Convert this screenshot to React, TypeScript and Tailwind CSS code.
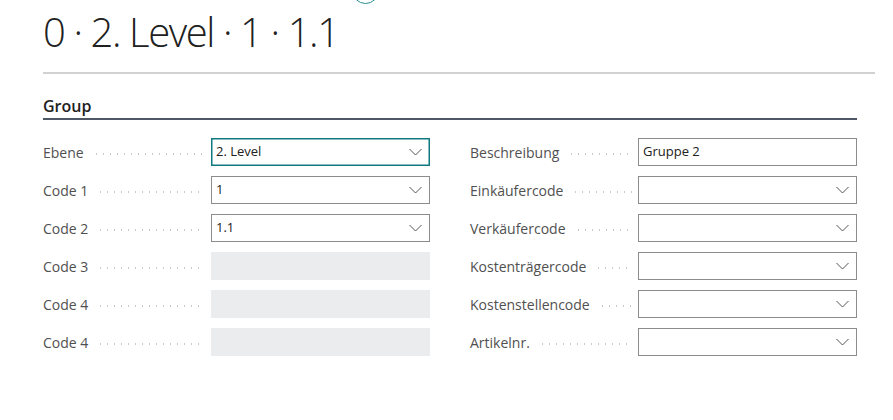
import React from "react";

type Field = {
  label: string;
  value?: string;
  kind: "select" | "text" | "disabled";
  focused?: boolean;
};

const leftFields: Field[] = [
  { label: "Ebene", value: "2. Level", kind: "select", focused: true },
  { label: "Code 1", value: "1", kind: "select" },
  { label: "Code 2", value: "1.1", kind: "select" },
  { label: "Code 3", kind: "disabled" },
  { label: "Code 4", kind: "disabled" },
  { label: "Code 4", kind: "disabled" },
];

const rightFields: Field[] = [
  { label: "Beschreibung", value: "Gruppe 2", kind: "text" },
  { label: "Einkäufercode", kind: "select" },
  { label: "Verkäufercode", kind: "select" },
  { label: "Kostenträgercode", kind: "select" },
  { label: "Kostenstellencode", kind: "select" },
  { label: "Artikelnr.", kind: "select" },
];

function Chevron() {
  return (
    <svg width="13" height="8" viewBox="0 0 13 8" fill="none" className="shrink-0">
      <path d="M0.5 1 L6.5 7 L12.5 1" stroke="#555" strokeWidth="1" />
    </svg>
  );
}

function FieldRow({ field }: { field: Field }) {
  return (
    <div className="flex items-center h-[28px]">
      <div className="flex items-center w-[168px] shrink-0">
        <span className="text-[14px] text-[#505050] whitespace-nowrap">{field.label}</span>
        <div className="flex-1 ml-[9px] mr-[6px] mt-[4px] h-[2px] bg-[radial-gradient(circle,_#cacaca_0.8px,_transparent_1px)] bg-[length:7px_2px] bg-repeat-x" />
      </div>
      {field.kind === "disabled" ? (
        <div className="flex-1 h-full bg-[#ebeced]" />
      ) : (
        <div
          className={
            field.focused
              ? "flex-1 h-full flex items-center justify-between pl-[4px] pr-[7px] border border-[#0f7b80] shadow-[inset_0_0_0_0.5px_#0f7b80] bg-white"
              : "flex-1 h-full flex items-center justify-between pl-[4px] pr-[7px] border border-[#8c8c8c] bg-white"
          }
        >
          <span className="text-[13px] text-[#212121]">{field.value ?? ""}</span>
          {field.kind === "select" && <Chevron />}
        </div>
      )}
    </div>
  );
}

export default function App() {
  return (
    <div
      className="relative w-[893px] h-[420px] overflow-hidden bg-white"
      style={{ fontFamily: '"Open Sans", "Noto Sans", sans-serif' }}
    >
      {/* partly visible action circle at the top */}
      <div className="absolute left-[352px] top-[-23px] w-[27px] h-[27px] rounded-full border-[1.5px] border-[#2a8f94]" />

      <div className="pl-[43px] pr-[18px]">
        <h1 className="mt-[11px] text-[40px] leading-[41px] font-light tracking-[-1.4px] text-[#212121] whitespace-nowrap">
          0 · 2. Level · 1 · 1.1
        </h1>
        <div className="mt-[20px] h-[2px] bg-[#d1d1d1]" />

        <div className="mr-[18px] mt-[22px] pb-[2px] border-b-2 border-[#4d5766]">
          <h2 className="text-[16px] leading-[20px] font-semibold text-[#212121]">Group</h2>
        </div>

        <div className="mr-[18px] mt-[18px] grid grid-cols-2 gap-x-[40px]">
          <div className="flex flex-col gap-[10px]">
            {leftFields.map((f, i) => (
              <FieldRow key={i} field={f} />
            ))}
          </div>
          <div className="flex flex-col gap-[10px]">
            {rightFields.map((f, i) => (
              <FieldRow key={i} field={f} />
            ))}
          </div>
        </div>
      </div>
    </div>
  );
}
